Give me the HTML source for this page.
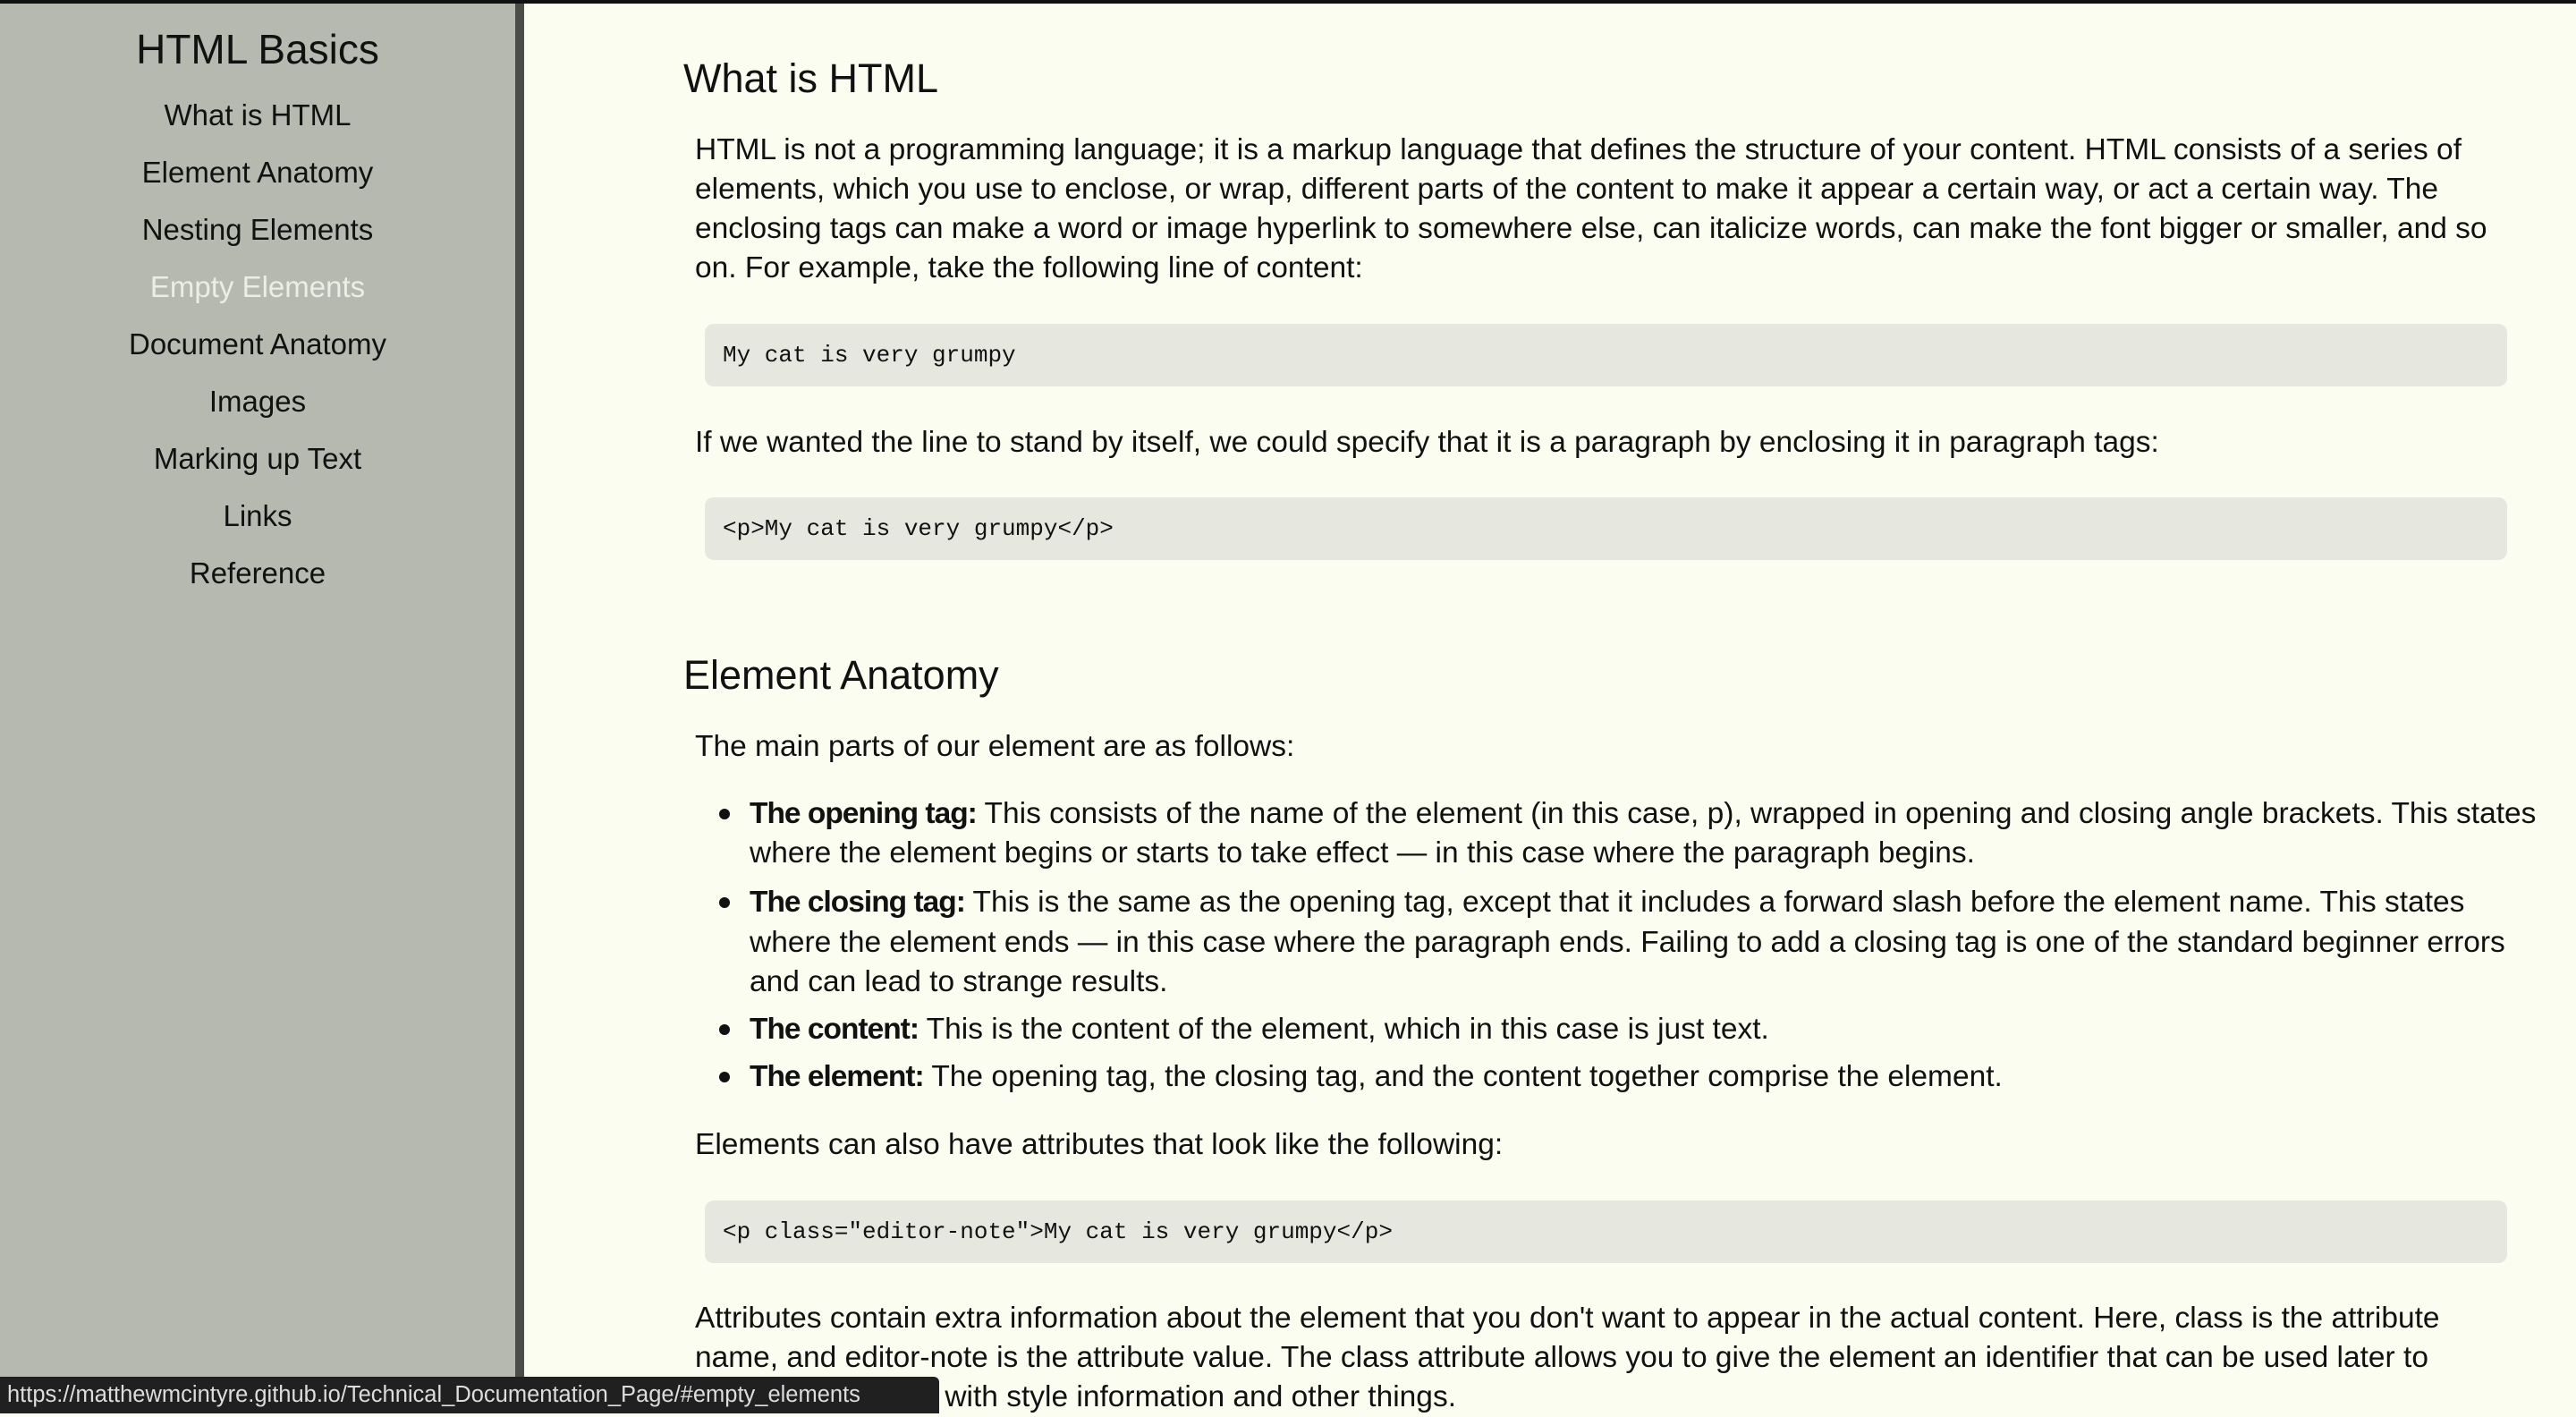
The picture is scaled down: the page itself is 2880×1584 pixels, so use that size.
<!DOCTYPE html>
<html><head><meta charset="utf-8"><style>
html,body{margin:0;padding:0}
body{width:2880px;height:1580px;overflow:hidden;position:relative;background:#fafdf0;font-family:"Liberation Sans",sans-serif;color:#111}
.topbar{position:absolute;left:0;top:0;width:2880px;height:4px;background:#111}
.side{position:absolute;left:0;top:4px;width:576px;height:1576px;background:#b6b9b0}
.sideb{position:absolute;left:576px;top:4px;width:10px;height:1576px;background:#4b4d48}
.side .t{position:absolute;left:0;width:576px;text-align:center;font-size:46px;top:24px}
.side a{position:absolute;left:0;width:576px;text-align:center;font-size:33px;color:#111;text-decoration:none;line-height:44px}
.l{position:absolute;left:777px;white-space:nowrap;font-size:33.5px;line-height:44px}
.li{left:838px}
.li b{letter-spacing:-1px}
.h{position:absolute;left:764px;font-size:45px;white-space:nowrap;line-height:60px}
.code{position:absolute;left:788px;width:2015px;height:70px;background:#e6e8e0;border-radius:10px;font-family:"Liberation Mono",monospace;font-size:26px;line-height:70px;padding-left:20px;box-sizing:border-box}
.dot{position:absolute;left:804px;width:12px;height:12px;border-radius:50%;background:#111}
b{font-weight:bold}
.status{position:absolute;left:0;top:1539px;width:1050px;height:41px;background:#202020;color:#ddd;font-size:25.5px;line-height:41px;padding-left:8px;box-sizing:border-box;border-top-right-radius:6px;white-space:nowrap}
</style></head><body>
<div class="topbar"></div>
<div class="side">
<div class="t">HTML Basics</div>
<a style="top:103px">What is HTML</a>
<a style="top:167px">Element Anatomy</a>
<a style="top:231px">Nesting Elements</a>
<a style="top:295px;color:#eceee6">Empty Elements</a>
<a style="top:359px">Document Anatomy</a>
<a style="top:423px">Images</a>
<a style="top:487px">Marking up Text</a>
<a style="top:551px">Links</a>
<a style="top:615px">Reference</a>
</div>
<div class="sideb"></div>

<div class="h" style="top:58px">What is HTML</div>
<div class="l" style="top:146px">HTML is not a programming language; it is a markup language that defines the structure of your content. HTML consists of a series of</div>
<div class="l" style="top:190px">elements, which you use to enclose, or wrap, different parts of the content to make it appear a certain way, or act a certain way. The</div>
<div class="l" style="top:234px">enclosing tags can make a word or image hyperlink to somewhere else, can italicize words, can make the font bigger or smaller, and so</div>
<div class="l" style="top:278px">on. For example, take the following line of content:</div>
<div class="code" style="top:362px">My cat is very grumpy</div>
<div class="l" style="top:473px">If we wanted the line to stand by itself, we could specify that it is a paragraph by enclosing it in paragraph tags:</div>
<div class="code" style="top:556px">&lt;p&gt;My cat is very grumpy&lt;/p&gt;</div>

<div class="h" style="top:725px">Element Anatomy</div>
<div class="l" style="top:813px">The main parts of our element are as follows:</div>
<div class="dot" style="top:904px"></div>
<div class="l li" style="top:888px"><b>The opening tag:</b> This consists of the name of the element (in this case, p), wrapped in opening and closing angle brackets. This states</div>
<div class="l li" style="top:932px">where the element begins or starts to take effect — in this case where the paragraph begins.</div>
<div class="dot" style="top:1003px"></div>
<div class="l li" style="top:987px"><b>The closing tag:</b> This is the same as the opening tag, except that it includes a forward slash before the element name. This states</div>
<div class="l li" style="top:1032px">where the element ends — in this case where the paragraph ends. Failing to add a closing tag is one of the standard beginner errors</div>
<div class="l li" style="top:1076px">and can lead to strange results.</div>
<div class="dot" style="top:1145px"></div>
<div class="l li" style="top:1129px"><b>The content:</b> This is the content of the element, which in this case is just text.</div>
<div class="dot" style="top:1198px"></div>
<div class="l li" style="top:1182px"><b>The element:</b> The opening tag, the closing tag, and the content together comprise the element.</div>
<div class="l" style="top:1258px">Elements can also have attributes that look like the following:</div>
<div class="code" style="top:1342px">&lt;p class="editor-note"&gt;My cat is very grumpy&lt;/p&gt;</div>
<div class="l" style="top:1452px">Attributes contain extra information about the element that you don't want to appear in the actual content. Here, class is the attribute</div>
<div class="l" style="top:1496px">name, and editor-note is the attribute value. The class attribute allows you to give the element an identifier that can be used later to</div>
<div class="l" style="top:1540px">target the element with style information and other things.</div>
<div class="status">https://matthewmcintyre.github.io/Technical_Documentation_Page/#empty_elements</div>
</body></html>
